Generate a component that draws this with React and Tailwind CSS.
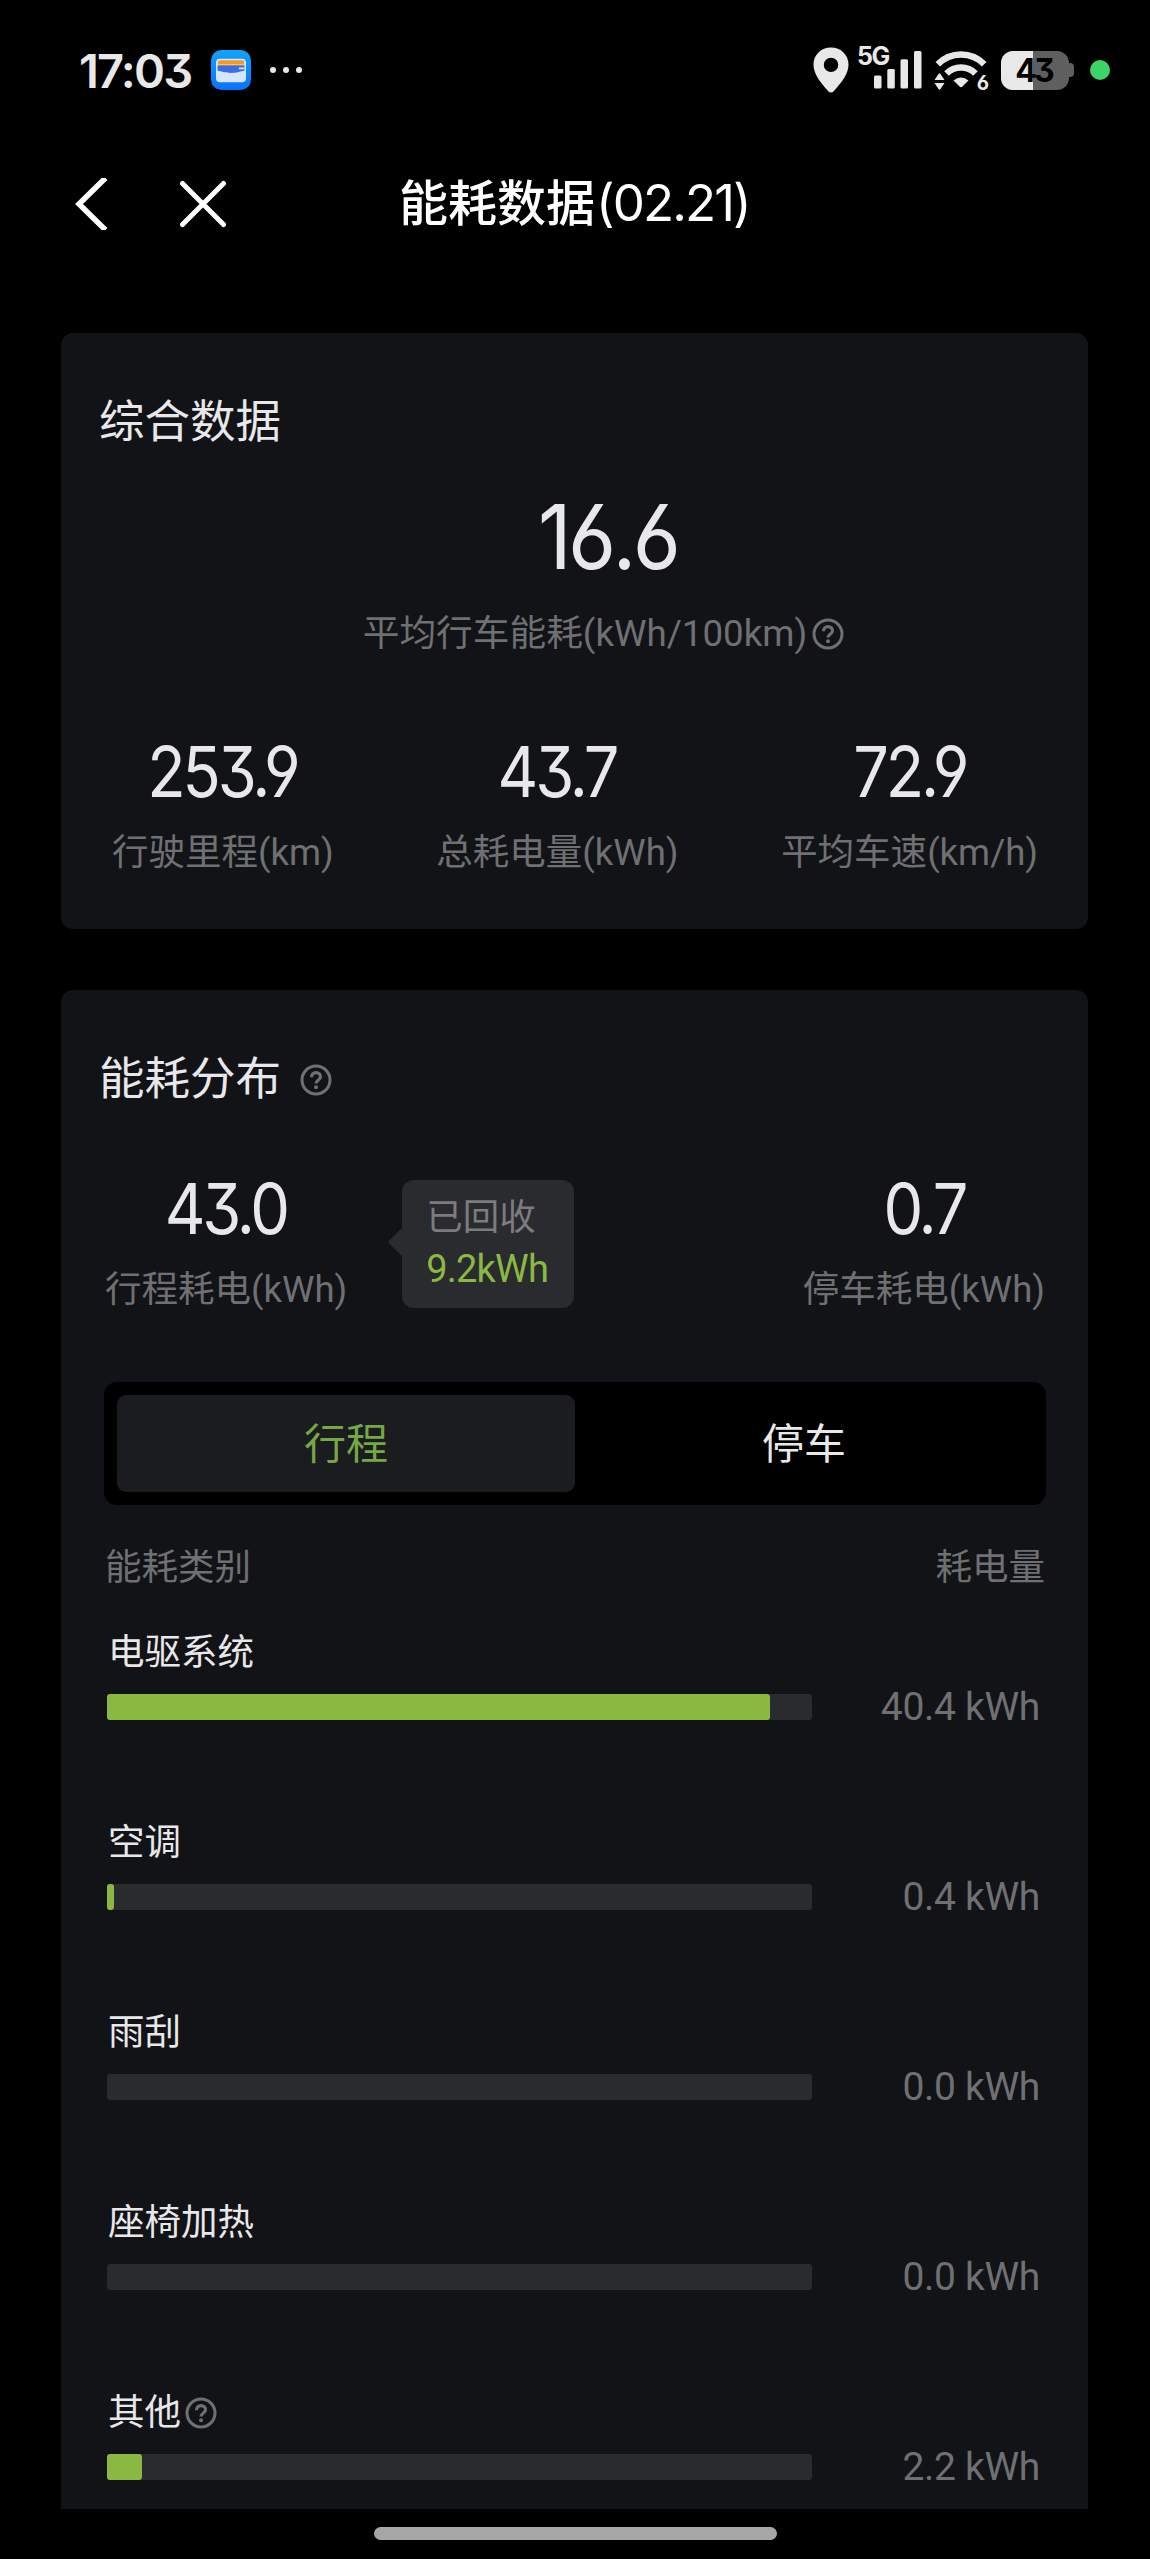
import { useState } from "react";

const summary = [
  { value: "253.9", label: "行驶里程", unit: "(km)" },
  { value: "43.7", label: "总耗电量", unit: "(kWh)" },
  { value: "72.9", label: "平均车速", unit: "(km/h)" },
];

const categories = [
  { name: "电驱系统", value: "40.4", percent: 94 },
  { name: "空调", value: "0.4", percent: 1 },
  { name: "雨刮", value: "0.0", percent: 0 },
  { name: "座椅加热", value: "0.0", percent: 0 },
  { name: "其他", value: "2.2", percent: 5, help: true },
];

// open six / nine and the flat-top three
const digits = "font-['Inter'] [font-feature-settings:'cv03','cv04','cv09']";

function HelpIcon({ className = "" }) {
  return (
    <svg
      viewBox="0 0 32 32"
      className={`w-8 h-8 shrink-0 text-[#6f7072] ${className}`}
      fill="none"
      stroke="currentColor"
    >
      <circle cx="16" cy="16" r="14" strokeWidth="3" />
      <path
        d="M11.5 13.2c0-2.8 1.900-4.600 4.500-4.600s4.500 1.700 4.500 4.200c0 3.400-4.500 3.400-4.500 6.700"
        strokeWidth="3.2"
      />
      <circle cx="16" cy="23.2" r="2" fill="currentColor" stroke="none" />
    </svg>
  );
}

function StatusBar() {
  return (
    <div className="h-[140px] flex items-center pl-[79px] pr-[40px] text-[#e8e8e8]">
      <span className={`w-[132px] pt-[2px] text-[47px] leading-[56px] font-semibold tracking-[-1.8px] ${digits}`}>
        17:03
      </span>
      <svg viewBox="0 0 40 40" className="w-10 h-10">
        <defs>
          <linearGradient id="wallet" x1="0" y1="0" x2="0" y2="1">
            <stop offset="0" stopColor="#10a5fa" />
            <stop offset="1" stopColor="#0a72fb" />
          </linearGradient>
        </defs>
        <rect width="40" height="40" rx="10.5" fill="url(#wallet)" />
        <rect x="5" y="8.7" width="30" height="23.5" rx="4" fill="#d5e6fc" />
        <rect x="7" y="10.3" width="26" height="6" rx="1.5" fill="#f39a24" />
        <path d="M7 14.6h26" stroke="#fbc678" strokeWidth="1" />
        <path d="M6.6 15.6h26.8v5.2c-3.6.4-6.8 2.2-13.4 2.2s-9.8-1.8-13.4-2.2z" fill="#3b6de3" />
        <path d="M28.5 18.4h4" stroke="#d5e6fc" strokeWidth="1.6" strokeLinecap="round" />
      </svg>
      <div className="flex gap-[7px] ml-[19px]">
        <i className="w-1.5 h-1.5 rounded-full bg-[#e8e8e8]" />
        <i className="w-1.5 h-1.5 rounded-full bg-[#e8e8e8]" />
        <i className="w-1.5 h-1.5 rounded-full bg-[#e8e8e8]" />
      </div>

      <div className="ml-auto flex items-center">
        <svg viewBox="0 0 36 46" className="w-9 h-[46px]" fill="currentColor">
          <path
            fillRule="evenodd"
            d="M18 .5C8 .5.5 8 .5 17.5c0 8.500 5.500 16.500 14.500 26.500q3 3 6 0c9-10 14.500-18 14.500-26.500C35.500 8 28 .5 18 .5zM18 10.700a7.200 7.200 0 1 1 0 14.400 7.200 7.200 0 0 1 0-14.400z"
          />
        </svg>
        <div className="relative w-[66px] h-[46px] ml-[8px]">
          <span className="absolute left-0 top-[-5px] font-['Inter'] text-[25px] leading-7 font-bold tracking-[-1.5px]">
            5G
          </span>
          <svg viewBox="0 0 66 46" className="w-full h-full" fill="currentColor">
            <rect x="17" y="28.5" width="7.5" height="13" rx="1.5" />
            <rect x="30.3" y="22" width="7.5" height="19.5" rx="1.5" />
            <rect x="43.5" y="12.2" width="7.5" height="29.3" rx="1.5" />
            <rect x="57" y="4" width="7.5" height="37.5" rx="1.5" />
          </svg>
        </div>
        <div className="relative w-[54px] h-[46px] ml-[11px]">
          <svg viewBox="0 0 54 46" className="w-full h-full" fill="none" stroke="currentColor">
            <path d="M3.8 17.3a32.5 32.5 0 0 1 46.4 0" strokeWidth="6.5" />
            <path d="M12.5 26.5a20.5 20.5 0 0 1 29 0" strokeWidth="6.5" />
            <path d="M19.5 33.5q7.500-5.800 15 0l-5.800 5.800q-1.700 1.700-3.400 0z" fill="currentColor" stroke="none" />
            <path d="M.5 33l4-6q1-1.500 2 0l4 6zM.5 36h10l-4 6q-1 1.500-2 0z" fill="currentColor" stroke="none" />
          </svg>
          <span className={`absolute right-[-1px] bottom-[-2px] text-[20px] leading-6 font-bold ${digits}`}>
            6
          </span>
        </div>
        <div className="relative flex items-center ml-[13px]">
          <div className="w-[68px] h-[39px] rounded-[12px] overflow-hidden bg-[#5f5f5f]">
            <div className="w-[32px] h-full bg-[#e8e8e8]" />
          </div>
          <div className="w-[5px] h-[14px] rounded-r-[4px] bg-[#5f5f5f]" />
          <span className={`absolute left-0 w-[65px] text-center text-[32px] leading-[39px] font-bold text-black tracking-[-3px] ${digits}`}>
            43
          </span>
        </div>
        <i className="w-[20px] h-[20px] ml-[16px] rounded-full bg-[#3bd466]" />
      </div>
    </div>
  );
}

function NavBar() {
  return (
    <div className="h-[128px] flex items-center pl-[75px] text-white">
      <svg viewBox="0 0 33 52" className="w-[33px] h-[52px]" fill="none" stroke="currentColor">
        <path d="M30.5 0L4 26l26.5 26" strokeWidth="5.5" />
      </svg>
      <svg viewBox="0 0 48 48" className="w-12 h-12 ml-[71px]" fill="none" stroke="currentColor">
        <path d="M3.5 3.5l41 41M44.5 3.5l-41 41" strokeWidth="5" strokeLinecap="round" />
      </svg>
      <h1 className="ml-[172px] text-[49px] leading-[60px] font-medium whitespace-nowrap">
        能耗数据
        <span className="ml-[1px] font-['Inter'] text-[51px] font-normal tracking-[-1.9px]">(02.21)</span>
      </h1>
    </div>
  );
}

function Figure({ value, label, unit }) {
  return (
    <div className="flex flex-col items-center">
      <span className={`h-[70px] pt-[2px] text-[70px] leading-[70px] text-[#e8e8ea] tracking-[-3.5px] scale-x-[0.9] ${digits}`}>
        {value}
      </span>
      <span className="mt-[26px] text-[36.5px] leading-[44px] text-[#6f7072] whitespace-nowrap">
        {label}
        {unit}
      </span>
    </div>
  );
}

function CategoryRow({ name, value, percent, help }) {
  return (
    <div className="h-[190px]">
      <div className="flex items-center h-[44px] pl-[1px] text-[36.5px] leading-[44px] text-[#e8e8ea]">
        {name}
        {help && <HelpIcon className="ml-[4px]" />}
      </div>
      <div className="mt-[19px] flex items-center justify-between h-[26px]">
        <div className="w-[705px] h-[26px] rounded-[3px] bg-[#2a2b2f]">
          <div
            className="h-full rounded-[3px] bg-[#8ab942]"
            style={{ width: `${percent}%` }}
          />
        </div>
        <span className="text-[39px] leading-[26px] tracking-[-0.3px] text-[#6f7072] pr-[4px]">
          {value} kWh
        </span>
      </div>
    </div>
  );
}

export default function App() {
  const [tab, setTab] = useState("trip");

  const tabClass = (name) =>
    tab === name ? "bg-[#1b1c20] text-[#76a745]" : "text-[#e8e8e8]";

  return (
    <div
      lang="zh-CN"
      className="w-[1150px] h-[2559px] overflow-hidden bg-black font-['Roboto','Noto_Sans_CJK_SC',sans-serif]"
    >
      <StatusBar />
      <NavBar />

      <section className="mt-[65px] ml-[61px] w-[1027px] h-[596px] pt-[62px] rounded-[12px] bg-[#121317]">
        <h2 className="pl-[38px] text-[45.5px] leading-[56px] text-[#e8e8ea]">综合数据</h2>
        <div className="mt-[38px] flex flex-col items-center">
          <span className={`ml-[66px] h-[91px] pt-[2px] text-[90px] leading-[91px] text-[#e8e8ea] tracking-[-4px] scale-x-[0.92] ${digits}`}>
            16.6
          </span>
          <div className="mt-[32px] pl-[58px] flex items-center h-[44px] text-[36.7px] leading-[44px] text-[#6f7072]">
            平均行车能耗(kWh/100km)
            <HelpIcon className="ml-[5px]" />
          </div>
        </div>
        <div className="mt-[79px] flex justify-between pl-[51px] pr-[50px]">
          {summary.map((item) => (
            <Figure key={item.label} {...item} />
          ))}
        </div>
      </section>

      <section className="mt-[61px] ml-[61px] w-[1027px] h-[1519px] pt-[62px] rounded-t-[12px] bg-[#121317] overflow-hidden">
        <h2 className="pl-[38px] flex items-center text-[45.5px] leading-[56px] text-[#e8e8ea]">
          能耗分布
          <HelpIcon className="ml-[19px]" />
        </h2>

        <div className="mt-[64px] pl-[44px] pr-[43px] flex items-start">
          <Figure value="43.0" label="行程耗电" unit="(kWh)" />
          <div className="relative mt-[8px] ml-[55px] w-[172px] h-[128px] pt-[15px] pl-[24px] rounded-[12px] bg-[#2a2b2e] text-[36.5px]">
            <i className="absolute left-[-10px] top-[52px] w-5 h-5 rotate-45 rounded-[2px] bg-[#2a2b2e]" />
            <p className="leading-[46px] text-[#7b7c7e]">已回收</p>
            <p className="mt-[4px] text-[38px] leading-[48px] tracking-[-0.8px] text-[#8ab942]">9.2kWh</p>
          </div>
          <div className="ml-auto">
            <Figure value="0.7" label="停车耗电" unit="(kWh)" />
          </div>
        </div>

        <div className="mt-[70px] ml-[43px] w-[942px] h-[123px] p-[13px] flex rounded-[13px] bg-black text-[42px] leading-[99px]">
          <button
            onClick={() => setTab("trip")}
            className={`w-[458px] h-[97px] rounded-[9px] ${tabClass("trip")}`}
          >
            行程
          </button>
          <button
            onClick={() => setTab("parking")}
            className={`w-[458px] h-[97px] rounded-[9px] ${tabClass("parking")}`}
          >
            停车
          </button>
        </div>

        <div className="mt-[41px] pl-[44px] pr-[43px] flex justify-between text-[36.5px] leading-[44px] text-[#6f7072]">
          <span>能耗类别</span>
          <span>耗电量</span>
        </div>

        <div className="mt-[41px] pl-[46px] pr-[44px]">
          {categories.map((item) => (
            <CategoryRow key={item.name} {...item} />
          ))}
        </div>
      </section>

      <div className="mt-[18px] mx-auto w-[403px] h-[13px] rounded-full bg-[#a6a6a6]" />
    </div>
  );
}
